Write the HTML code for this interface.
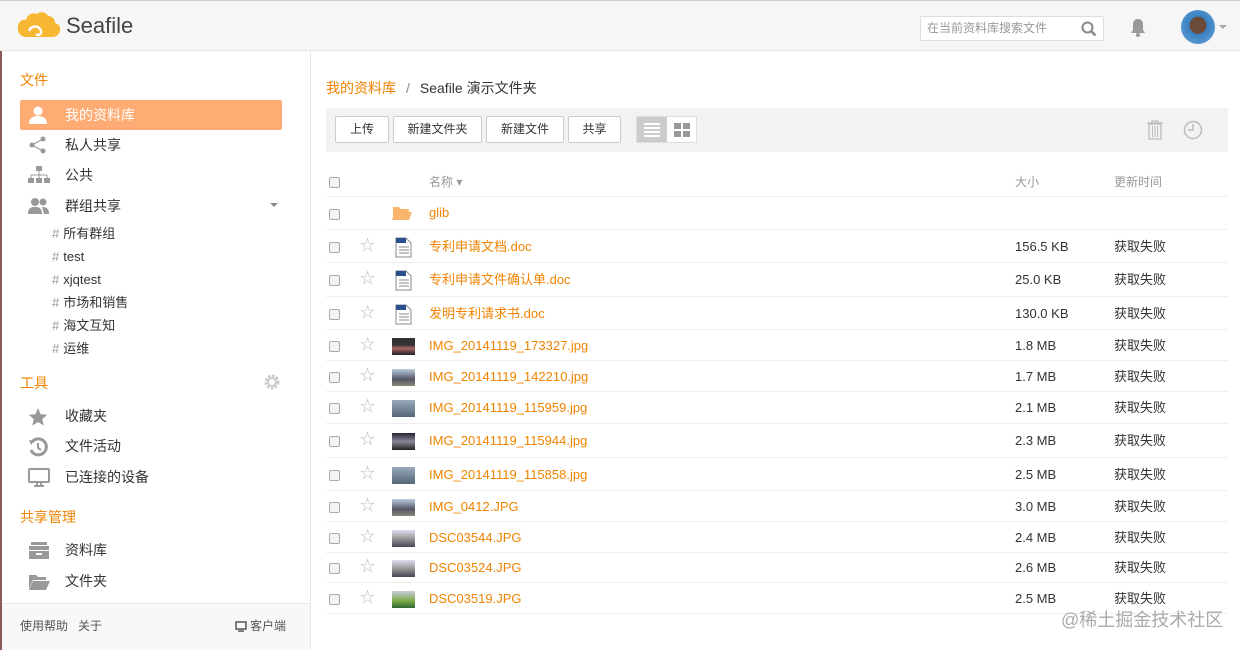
<!DOCTYPE html>
<html><head><meta charset="utf-8"><style>
*{margin:0;padding:0;box-sizing:border-box}
body{width:1240px;height:650px;overflow:hidden;background:#fff;font-family:"Liberation Sans","Noto Sans CJK SC",sans-serif;color:#333;position:relative;font-size:13px}
.abs{position:absolute}
span,div{line-height:16px}
#hdr{left:0;top:0;width:1240px;height:51px;background:#f6f6f6;border-bottom:1px solid #e5e5e5;border-top:1px solid #ccc}
#side{left:0;top:51px;width:311px;height:599px;border-right:1px solid #e8e8e8;border-left:2px solid #8a5a5a}
.sh{color:#f08300;font-size:14px;position:absolute;left:18px;line-height:18px}
.it{position:absolute;left:18px;width:262px;height:30px;line-height:30px;font-size:14px;color:#333;padding-left:45px}
.it svg{position:absolute;left:8px;top:6px}
.sub{position:absolute;left:50px;font-size:13px;color:#333;line-height:16px}
.sub b{color:#999;font-weight:normal;margin-right:4px}
#foot{left:2px;top:603px;width:308px;height:47px;background:#f8f8f8;border-top:1px solid #e8e8e8;font-size:12px;color:#555}
.btn{position:absolute;top:116px;height:27px;border:1px solid #ccc;background:#fff;border-radius:2px;font-size:12px;line-height:25px;text-align:center;color:#333}
.row{position:absolute;left:326px;width:902px;border-bottom:1px solid #eee;font-size:13px}
.row span{line-height:16px}
.row .cb{position:absolute;left:3px;width:11px;height:11px;border:1px solid #aaa;border-radius:2px;background:#f4f4f4}
.row .st{position:absolute;left:34px;color:#bbb;font-size:15px}
.row .nm{position:absolute;left:103px;color:#f08300}
.row .sz{position:absolute;left:689px;color:#333}
.row .tm{position:absolute;left:788px;color:#333}
.row .ic{position:absolute;left:66px}
</style></head><body>
<div id="hdr" class="abs">
 <svg class="abs" style="left:15px;top:8px" width="50" height="32" viewBox="0 0 50 32"><path d="M3 18c0-5 4-8 8-7 1-5 6-8 11-6 3-3 9-2 11 2 4 0 7 3 7 7 4 1 6 4 5 8-1 4-4 6-8 6H12C6 28 2 24 3 18z" fill="#f7b733"/><path d="M14 22c2-5 8-6 11-2s-1 8-4 5" stroke="#fff" stroke-width="2.5" fill="none"/></svg>
 <div class="abs" style="left:66px;top:13px;font-size:22px;line-height:24px;color:#444">Seafile</div>
 <div class="abs" style="left:920px;top:15px;width:184px;height:25px;background:#fff;border:1px solid #ddd;border-radius:2px;font-size:12px;color:#999;line-height:23px;padding-left:6px">在当前资料库搜索文件</div>
 <svg class="abs" style="left:1081px;top:20px" width="16" height="16"><circle cx="6.5" cy="6.5" r="5" stroke="#888" stroke-width="2" fill="none"/><path d="M10 10l4.5 4.5" stroke="#888" stroke-width="2.4"/></svg>
 <svg class="abs" style="left:1129px;top:17px" width="18" height="20"><path d="M9 1c-4 0-5 3-5 6v5l-2 3h14l-2-3V7c0-3-1-6-5-6z" fill="#999"/><circle cx="9" cy="17" r="2" fill="#999"/></svg>
 <div class="abs" style="left:1181px;top:9px;width:34px;height:34px;border-radius:50%;background:radial-gradient(circle at 50% 45%,#6b4a3a 0 8px,#3a7fc0 9px,#6aa8e0)"></div>
 <div class="abs" style="left:1219px;top:24px;border:4px solid transparent;border-top-color:#aaa"></div>
</div>
<div id="side" class="abs">
 <div class="sh" style="top:20px">文件</div>
 <div class="it" style="top:49px;background:#feac74;color:#fff;border-radius:2px"><svg width="20" height="18"><circle cx="10" cy="5" r="4.5" fill="#fff"/><path d="M1 18c0-6 4-8 9-8s9 2 9 8z" fill="#fff"/></svg>我的资料库</div>
 <div class="it" style="top:79px"><svg width="20" height="18"><circle cx="4" cy="9" r="2.5" fill="#999"/><circle cx="15" cy="3" r="2.5" fill="#999"/><circle cx="15" cy="15" r="2.5" fill="#999"/><path d="M4 9L15 3M4 9l11 6" stroke="#999"/></svg>私人共享</div>
 <div class="it" style="top:109px"><svg width="22" height="18"><rect x="8" y="0" width="6" height="5" fill="#999"/><path d="M11 5v4M3 9h16M3 9v3M11 9v3M19 9v3" stroke="#999"/><rect x="0" y="12" width="6" height="5" fill="#999"/><rect x="8" y="12" width="6" height="5" fill="#999"/><rect x="16" y="12" width="6" height="5" fill="#999"/></svg>公共</div>
 <div class="it" style="top:140px"><svg width="22" height="18"><circle cx="7" cy="5" r="4" fill="#999"/><circle cx="15" cy="5" r="3.5" fill="#999"/><path d="M0 17c0-6 3-7 7-7s7 1 7 7zM14 10c4 0 7 1 7 7h-5" fill="#999"/></svg>群组共享</div>
 <div class="abs" style="left:268px;top:152px;border:4px solid transparent;border-top-color:#888"></div>
 <div class="sub" style="top:175px"><b>#</b>所有群组</div>
 <div class="sub" style="top:198px"><b>#</b>test</div>
 <div class="sub" style="top:221px"><b>#</b>xjqtest</div>
 <div class="sub" style="top:244px"><b>#</b>市场和销售</div>
 <div class="sub" style="top:267px"><b>#</b>海文互知</div>
 <div class="sub" style="top:290px"><b>#</b>运维</div>
 <div class="sh" style="top:323px">工具</div>
 <svg class="abs" style="left:262px;top:323px" width="16" height="16"><circle cx="8" cy="8" r="6" stroke="#ccc" stroke-width="3" stroke-dasharray="2.5 1.5" fill="none"/><circle cx="8" cy="8" r="4" stroke="#ccc" stroke-width="2" fill="none"/></svg>
 <div class="it" style="top:350px"><svg width="20" height="20"><path d="M10 1l2.6 6.2 6.7.5-5.1 4.4 1.6 6.5L10 15l-5.8 3.6 1.6-6.5L.7 7.7l6.7-.5z" fill="#999"/></svg>收藏夹</div>
 <div class="it" style="top:380px"><svg width="20" height="20"><path d="M4 5a8 8 0 1 1-1 8" stroke="#999" stroke-width="3" fill="none"/><path d="M1 3l5 1-3 4z" fill="#999"/><path d="M10 6v5l3 2" stroke="#999" stroke-width="2" fill="none"/></svg>文件活动</div>
 <div class="it" style="top:411px"><svg width="22" height="20"><rect x="1" y="1" width="20" height="13" rx="1" stroke="#999" stroke-width="2" fill="none"/><path d="M9 14v3M13 14v3M6 18h10" stroke="#999" stroke-width="2"/></svg>已连接的设备</div>
 <div class="sh" style="top:457px">共享管理</div>
 <div class="it" style="top:484px"><svg width="22" height="20"><rect x="3" y="1" width="16" height="3" fill="#999"/><rect x="1" y="5" width="20" height="4" fill="#999"/><rect x="1" y="10" width="20" height="8" fill="#999"/><rect x="8" y="12" width="6" height="2" fill="#fff"/></svg>资料库</div>
 <div class="it" style="top:515px"><svg width="22" height="20"><path d="M1 3h7l2 2h8v3H5L1 17z" fill="#999"/><path d="M5 9h17l-4 9H1z" fill="#999"/></svg>文件夹</div>
</div>
<div id="foot" class="abs">
 <span class="abs" style="left:18px;top:14px">使用帮助&nbsp;&nbsp;&nbsp;关于</span>
 <svg class="abs" style="left:233px;top:17px" width="12" height="11"><rect x="1" y="1" width="10" height="7" stroke="#555" stroke-width="1.5" fill="none"/><path d="M3 10h6" stroke="#555" stroke-width="1.5"/></svg>
 <span class="abs" style="left:248px;top:14px">客户端</span>
</div>
<div class="abs" style="left:326px;top:79px;font-size:14px;line-height:18px"><span style="color:#f08300;line-height:18px">我的资料库</span><span style="color:#888;margin:0 10px;line-height:18px">/</span><span style="color:#333;line-height:18px">Seafile 演示文件夹</span></div>
<div class="abs" style="left:326px;top:108px;width:902px;height:44px;background:#f2f2f2"></div>
<div class="btn" style="left:335px;width:54px">上传</div>
<div class="btn" style="left:393px;width:89px">新建文件夹</div>
<div class="btn" style="left:486px;width:78px">新建文件</div>
<div class="btn" style="left:568px;width:53px">共享</div>
<div class="abs" style="left:636px;top:116px;width:61px;height:27px;border:1px solid #ddd;background:#fff"></div>
<div class="abs" style="left:637px;top:117px;width:30px;height:25px;background:#ccc"></div>
<svg class="abs" style="left:643px;top:122px" width="18" height="15"><path d="M1 2h16M1 6h16M1 10h16M1 14h16" stroke="#fff" stroke-width="2"/></svg>
<svg class="abs" style="left:674px;top:123px" width="16" height="14"><rect x="0" y="0" width="7" height="6" fill="#999"/><rect x="9" y="0" width="7" height="6" fill="#999"/><rect x="0" y="8" width="7" height="6" fill="#999"/><rect x="9" y="8" width="7" height="6" fill="#999"/></svg>
<svg class="abs" style="left:1146px;top:120px" width="18" height="20"><path d="M1 3h16M6 3V1h6v2M3 4h12v15H3z" stroke="#bbb" stroke-width="1.3" fill="none"/><path d="M6.5 6v11M9 6v11M11.5 6v11" stroke="#bbb"/></svg>
<svg class="abs" style="left:1183px;top:120px" width="20" height="20"><circle cx="10" cy="10" r="8.5" stroke="#bbb" stroke-width="1.5" fill="none"/><path d="M10 4v6H5" stroke="#bbb" stroke-width="1.5" fill="none"/></svg>
<div class="row" style="top:166px;height:31px"><span class="cb" style="top:11px"></span><span style="position:absolute;left:103px;top:8px;color:#999;font-size:12px">名称 ▾</span><span style="position:absolute;left:689px;top:8px;color:#999;font-size:12px">大小</span><span style="position:absolute;left:788px;top:8px;color:#999;font-size:12px">更新时间</span></div>
<div class="row" style="top:197px;height:33px"><span class="cb" style="top:12px"></span><svg class="ic" style="top:9px" width="20" height="15"><path d="M1 1h6l2 2h8v3H4L1 14z" fill="#f9b56b"/><path d="M3 6h17l-3 8H0z" fill="#f9b56b"/></svg><span class="nm" style="top:8px">glib</span></div>
<div id="rows"></div>
<script>
var R=[["专利申请文档.doc","156.5 KB",230,33,"d"],["专利申请文件确认单.doc","25.0 KB",263,34,"d"],["发明专利请求书.doc","130.0 KB",297,33,"d"],["IMG_20141119_173327.jpg","1.8 MB",330,31,"i1"],["IMG_20141119_142210.jpg","1.7 MB",361,31,"i2"],["IMG_20141119_115959.jpg","2.1 MB",392,32,"i3"],["IMG_20141119_115944.jpg","2.3 MB",424,34,"i4"],["IMG_20141119_115858.jpg","2.5 MB",458,33,"i3"],["IMG_0412.JPG","3.0 MB",491,31,"i2"],["DSC03544.JPG","2.4 MB",522,31,"i5"],["DSC03524.JPG","2.6 MB",553,30,"i5"],["DSC03519.JPG","2.5 MB",583,31,"i6"]];
var h="";R.forEach(function(r){var t=r[3];var c=Math.round(t/2);var ic;
if(r[4]=="d")ic='<svg class="ic" style="left:69px;top:'+(c-10)+'px" width="17" height="21"><path d="M1 1h10l5 5v14H1z" fill="#fff" stroke="#888"/><rect x="1" y="1" width="10" height="5" fill="#2a4f8f"/><path d="M4 10h10M4 13h10M4 16h10" stroke="#888"/></svg>';
else{var g={i1:"linear-gradient(#333 40%,#a66 60%,#222)",i2:"linear-gradient(#bcd,#556 60%,#887)",i3:"linear-gradient(#9ab,#567)",i4:"linear-gradient(#223,#889 50%,#222)",i5:"linear-gradient(#dde,#999 50%,#445)",i6:"linear-gradient(#ccd,#7a4 60%,#363)"}[r[4]];ic='<span class="ic" style="left:66px;top:'+(c-8)+'px;width:23px;height:17px;background:'+g+'"></span>';}
h+='<div class="row" style="top:'+r[2]+'px;height:'+t+'px"><span class="cb" style="top:'+(c-5)+'px"></span><span class="st" style="top:'+(c-9)+'px">☆</span>'+ic+'<span class="nm" style="top:'+(c-8)+'px">'+r[0]+'</span><span class="sz" style="top:'+(c-8)+'px">'+r[1]+'</span><span class="tm" style="top:'+(c-8)+'px">获取失败</span></div>';});
document.getElementById("rows").innerHTML=h;
</script>
<div class="abs" style="left:1061px;top:610px;font-size:18px;line-height:20px;color:#aaa">@稀土掘金技术社区</div>
</body></html>
